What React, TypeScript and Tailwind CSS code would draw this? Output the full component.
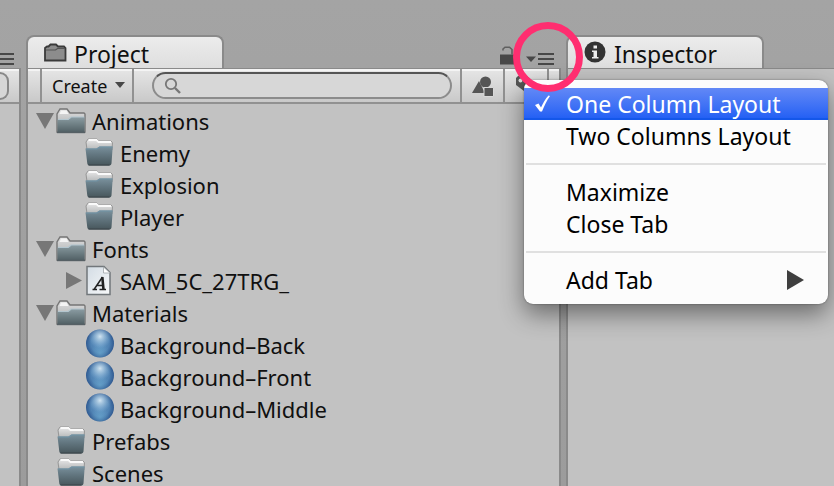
import type { ReactNode } from "react";

function OpenFolder() {
  return (
    <svg width="30" height="28" viewBox="0 0 30 28" aria-hidden="true">
      <defs>
        <linearGradient id="openFront" x1="0" y1="0" x2="0" y2="1">
          <stop offset="0" stopColor="#8b9ca3" />
          <stop offset="0.4" stopColor="#74858a" />
          <stop offset="1" stopColor="#526166" />
        </linearGradient>
        <linearGradient id="openBack" x1="0" y1="0" x2="0" y2="1">
          <stop offset="0" stopColor="#dedede" />
          <stop offset="1" stopColor="#a4a7a9" />
        </linearGradient>
      </defs>
      <path d="M1 25V7L4 2h7l3 4h14l1 1v18z" fill="url(#openBack)" stroke="#767676" strokeWidth="1.4" />
      <path d="M5 3.500h5.500l2 3.500H3.500z" fill="#f4f4f4" />
      <path d="M1.500 12.500h10.500l3-2.500h13.500V25h-27z" fill="url(#openFront)" />
      <path d="M2 12.500h10.200l3-2.500h13" fill="none" stroke="#b3c6cf" strokeWidth="1.200" />
      <path d="M1 25.500h28" stroke="#566065" strokeWidth="1.4" />
    </svg>
  );
}

function ClosedFolder() {
  return (
    <svg width="30" height="32" viewBox="0 0 30 32" aria-hidden="true">
      <defs>
        <linearGradient id="closedFront" x1="0" y1="0" x2="0" y2="1">
          <stop offset="0" stopColor="#7a919d" />
          <stop offset="0.4" stopColor="#647882" />
          <stop offset="1" stopColor="#47565b" />
        </linearGradient>
        <linearGradient id="closedBack" x1="0" y1="0" x2="0" y2="1">
          <stop offset="0" stopColor="#e9e9e9" />
          <stop offset="1" stopColor="#b4b6b7" />
        </linearGradient>
      </defs>
      <path d="M3 13L2 5l2-3h9l2 2h12l1.500 1.500L28 13z" fill="url(#closedBack)" stroke="#969696" strokeWidth="1" />
      <path d="M4.500 3h8l2 2H27" fill="none" stroke="#fafafa" strokeWidth="1.800" />
      <path d="M1.500 11.500h11l3-2h13.200L27.500 26.500q-.3 2-2 2H5.500q-2 0-2.200-2z" fill="url(#closedFront)" />
      <path d="M2 12h10.800l3-2h12.700" fill="none" stroke="#7193a6" strokeWidth="1.200" />
      <path d="M4.500 28h21" stroke="#3e494d" strokeWidth="1.200" />
    </svg>
  );
}

function FontFile() {
  return (
    <svg width="30" height="32" viewBox="0 0 30 32" aria-hidden="true">
      <defs>
        <linearGradient id="paper" x1="0" y1="0" x2="1" y2="1">
          <stop offset="0" stopColor="#d3dce4" />
          <stop offset="1" stopColor="#f8f9fa" />
        </linearGradient>
      </defs>
      <path d="M3 1.500h17l6 6v22H3z" fill="url(#paper)" stroke="#72777b" strokeWidth="1.500" />
      <path d="M19.500 2v6H26z" fill="#fff" stroke="#a0a4a8" strokeWidth="0.800" />
      <path d="M8.500 24.500h4.500M15.500 24.500h6.500M10 24.500L18.500 12M13 20.500h5" fill="none" stroke="#222" strokeWidth="1.500" />
      <path d="M18.300 12l1.200 12.500" stroke="#222" strokeWidth="2.600" />
    </svg>
  );
}

function Sphere() {
  return (
    <svg width="30" height="32" viewBox="0 0 30 32" aria-hidden="true">
      <defs>
        <radialGradient id="ball" cx="0.5" cy="0.5" r="0.5">
          <stop offset="0" stopColor="#6396c4" />
          <stop offset="0.65" stopColor="#4f82b3" />
          <stop offset="1" stopColor="#315b92" />
        </radialGradient>
        <radialGradient id="shine" cx="0.5" cy="0.25" r="0.42">
          <stop offset="0" stopColor="#e0eff8" stopOpacity="0.9" />
          <stop offset="0.45" stopColor="#b4d1e6" stopOpacity="0.55" />
          <stop offset="1" stopColor="#86b2d6" stopOpacity="0" />
        </radialGradient>
        <radialGradient id="glow" cx="0.5" cy="0.85" r="0.35">
          <stop offset="0" stopColor="#7cc0e0" stopOpacity="0.45" />
          <stop offset="1" stopColor="#7cc0e0" stopOpacity="0" />
        </radialGradient>
      </defs>
      <circle cx="16" cy="14.500" r="14" fill="url(#ball)" />
      <circle cx="16" cy="14.500" r="14" fill="url(#glow)" />
      <circle cx="16" cy="14.500" r="14" fill="url(#shine)" />
    </svg>
  );
}

const icons = { open: <OpenFolder />, closed: <ClosedFolder />, font: <FontFile />, ball: <Sphere /> };

type Item = { name: string; icon: keyof typeof icons; deep?: boolean; arrow?: "down" | "right" };

const items: Item[] = [
  { name: "Animations", icon: "open", arrow: "down" },
  { name: "Enemy", icon: "closed", deep: true },
  { name: "Explosion", icon: "closed", deep: true },
  { name: "Player", icon: "closed", deep: true },
  { name: "Fonts", icon: "open", arrow: "down" },
  { name: "SAM_5C_27TRG_", icon: "font", deep: true, arrow: "right" },
  { name: "Materials", icon: "open", arrow: "down" },
  { name: "Background–Back", icon: "ball", deep: true },
  { name: "Background–Front", icon: "ball", deep: true },
  { name: "Background–Middle", icon: "ball", deep: true },
  { name: "Prefabs", icon: "closed" },
  { name: "Scenes", icon: "closed" },
];

function TreeRow({ item }: { item: Item }) {
  return (
    <li className={`flex h-8 items-center ${item.deep ? "pl-9" : "pl-2"}`}>
      <span className="flex w-5 shrink-0">
        {item.arrow && (
          <button aria-label={`Toggle ${item.name}`} className="block">
            <svg width="20" height="20" viewBox="0 0 20 20" fill="#777">
              <path d={item.arrow === "down" ? "M0 2h18L9 18z" : "M2 1v17l16-8.500z"} />
            </svg>
          </button>
        )}
      </span>
      <span className="w-9 shrink-0">{icons[item.icon]}</span>
      <span className="whitespace-nowrap text-[22px] leading-6">{item.name}</span>
    </li>
  );
}

function Tab({ icon, children }: { icon: ReactNode; children: ReactNode }) {
  return (
    <button
      role="tab"
      className="flex h-[33px] w-[198px] items-center rounded-t-lg border-2 border-b-0 border-[#8a8a8a] bg-linear-to-b from-[#ececec] to-[#dedede] pl-4 pt-0.5 text-[23px] leading-8"
    >
      <span className="w-[30px] shrink-0">{icon}</span>
      {children}
    </button>
  );
}

function Lines() {
  return (
    <svg width="16" height="12" viewBox="0 0 16 12" aria-hidden="true">
      <path d="M0 1h16M0 6h16M0 11h16" stroke="#484848" strokeWidth="2" />
    </svg>
  );
}

function MenuItem({ children, checked, submenu }: { children: ReactNode; checked?: boolean; submenu?: boolean }) {
  return (
    <button
      role="menuitem"
      className={`flex h-8 w-full items-center pr-6 text-[23px] leading-8 ${
        checked
          ? "bg-linear-to-b from-[#6288f6] to-[#1f5df4] text-white shadow-[inset_0_-2px_0_#1457ea]"
          : "text-black"
      }`}
    >
      <span className="flex w-[42px] shrink-0 pl-2.5">
        {checked && (
          <svg width="18" height="20" viewBox="0 0 18 20" aria-hidden="true">
            <path d="M1 11l3.500-1.500 2.500 4C9 9 11.500 4.500 14.500 1.500l1.500.5C12.500 7 10 12.500 8 17.500H6z" fill="#fff" />
          </svg>
        )}
      </span>
      <span className="flex-1 whitespace-nowrap text-left">{children}</span>
      {submenu && (
        <svg width="18" height="20" viewBox="0 0 18 20" aria-hidden="true">
          <path d="M1 0v20l17-10z" fill="#3f3f3f" />
        </svg>
      )}
    </button>
  );
}

function Separator() {
  return <div role="separator" className="mx-0.5 my-[11px] h-0.5 bg-[#e0e0e0]" />;
}

function PanelMenu() {
  return (
    <div
      role="menu"
      className="absolute left-[-2px] top-[27px] z-10 w-[304px] rounded-[9px] bg-[#fcfcfc] py-2 shadow-[0_10px_24px_rgba(0,0,0,0.45),0_0_2px_rgba(0,0,0,0.4)]"
    >
      <MenuItem checked>One Column Layout</MenuItem>
      <MenuItem>Two Columns Layout</MenuItem>
      <Separator />
      <MenuItem>Maximize</MenuItem>
      <MenuItem>Close Tab</MenuItem>
      <Separator />
      <MenuItem submenu>Add Tab</MenuItem>
    </div>
  );
}

const bar =
  "flex h-[35px] shrink-0 border-b-2 border-[#919191] bg-linear-to-b from-[#e6e6e6] to-[#c9c9c9] shadow-[inset_0_2px_0_#f4f4f4]";
const panel = "flex min-h-0 flex-1 flex-col border-t border-[#8a8a8a] bg-[#c2c2c2]";

export default function App() {
  return (
    <main className="flex h-screen gap-[5px] overflow-hidden bg-linear-to-b from-[#a4a4a4] to-[#9c9c9c] pt-[35px] font-['Noto_Sans','Open_Sans',sans-serif] text-[#101010]">
      <section className="flex w-[21px] shrink-0 flex-col" aria-label="Hierarchy">
        <header className="flex h-[33px] items-end pb-[3px]">
          <button aria-label="Hierarchy options" className="-ml-0.5">
            <Lines />
          </button>
        </header>
        <div className={`${panel} border-r-2`}>
          <div className={`${bar} items-center`}>
            <div className="h-7 w-[9px] rounded-r-full border-2 border-l-0 border-[#888] bg-[#d6d6d6]" />
          </div>
        </div>
      </section>

      <section className="flex min-w-0 flex-1 flex-col" aria-label="Project">
        <header className="flex h-[33px] items-end">
          <Tab
            icon={
              <svg width="24" height="22" viewBox="0 0 24 22" aria-hidden="true">
                <path d="M1 17.500V5l2-1.500h1.500L6.500 1.500h5.500l2 2h6L21.500 5v12.500z" fill="#8c8c8c" stroke="#3a3a3a" strokeWidth="1.800" />
                <path d="M2 7h9.500l2-1.500H21" fill="none" stroke="#555" strokeWidth="1.200" />
              </svg>
            }
          >
            Project
          </Tab>
          <div className="ml-auto flex items-end gap-2.5 pb-[3px]">
            <button aria-label="Lock panel">
              <svg width="16" height="19" viewBox="0 0 16 19" aria-hidden="true">
                <path d="M0 8.500h14V18.500H0z" fill="#484848" />
                <path d="M3 4.500V3L5 1.200h4.500l2.500 2.300v5" fill="none" stroke="#606060" strokeWidth="1.600" />
              </svg>
            </button>
            <div className="relative">
              <button aria-label="Panel options" className="flex items-end gap-0.5 pr-[7px]">
                <svg width="10" height="12" viewBox="0 0 10 12" aria-hidden="true">
                  <path d="M0 3.500h10L5 9z" fill="#484848" />
                </svg>
                <Lines />
              </button>
              <PanelMenu />
              <div className="pointer-events-none absolute -left-[13px] top-[-31px] z-20 size-[70px] rounded-full border-[7px] border-[#ff2e70]" />
            </div>
          </div>
        </header>
        <div className={`${panel} border-x-2`}>
          <div className={`${bar} pl-3`}>
            <button className="flex w-[94px] items-center gap-2 border-x-2 border-[#919191] pl-2.5 pt-0.5 text-[18px]">
              Create
              <svg width="10" height="14" viewBox="0 0 10 14" aria-hidden="true">
                <path d="M0 2h10L5 8z" fill="#484848" />
              </svg>
            </button>
            <label className="my-[3px] ml-[18px] mr-2 flex min-w-0 flex-1 items-center rounded-full border-2 border-[#8c8c8c] border-t-[#555] bg-[#d7d7d7] pl-2.5">
              <svg width="18" height="18" viewBox="0 0 18 18" fill="none" stroke="#777" aria-hidden="true">
                <circle cx="7" cy="7" r="5.200" strokeWidth="1.800" />
                <path d="M11 11l5 5" strokeWidth="2.400" />
              </svg>
              <input type="search" aria-label="Search assets" className="min-w-0 flex-1 bg-transparent px-2 text-[18px] leading-5 outline-none" />
            </label>
            <button aria-label="Search by type" className="flex w-[45px] items-center justify-center border-x-2 border-[#919191]">
              <svg width="24" height="24" viewBox="0 0 24 24" fill="#555" aria-hidden="true">
                <path d="M1 19L8 7l6 12z" />
                <circle cx="14.500" cy="8" r="5.500" />
                <path d="M13 13.500h9.500v9H13z" stroke="#d8d8d8" />
              </svg>
            </button>
            <button aria-label="Search by label" className="flex w-[44px] items-center border-r-2 border-[#919191] pl-2.5">
              <svg width="24" height="24" viewBox="0 0 24 24" aria-hidden="true">
                <path d="M1 4l2-2h9l9 8-8 10L1 11z" fill="#555" />
                <circle cx="5.500" cy="6.500" r="2" fill="#ddd" />
              </svg>
            </button>
            <span className="w-[10px]" />
          </div>
          <ul className="pt-px">
            {items.map((item) => (
              <TreeRow key={item.name} item={item} />
            ))}
          </ul>
        </div>
      </section>

      <section className="flex w-[268px] shrink-0 flex-col" aria-label="Inspector">
        <header className="flex h-[33px] items-end">
          <Tab
            icon={
              <svg width="22" height="26" viewBox="0 0 22 26" aria-hidden="true">
                <circle cx="11" cy="11" r="10.500" fill="#333" />
                <path d="M9.500 4.500h3.500v3H9.500zM8 9.500h5V16h1.500v1.500H8V16h1.500v-5H8z" fill="#eee" />
              </svg>
            }
          >
            Inspector
          </Tab>
        </header>
        <div className={`${panel} border-l-2`} />
      </section>
    </main>
  );
}
